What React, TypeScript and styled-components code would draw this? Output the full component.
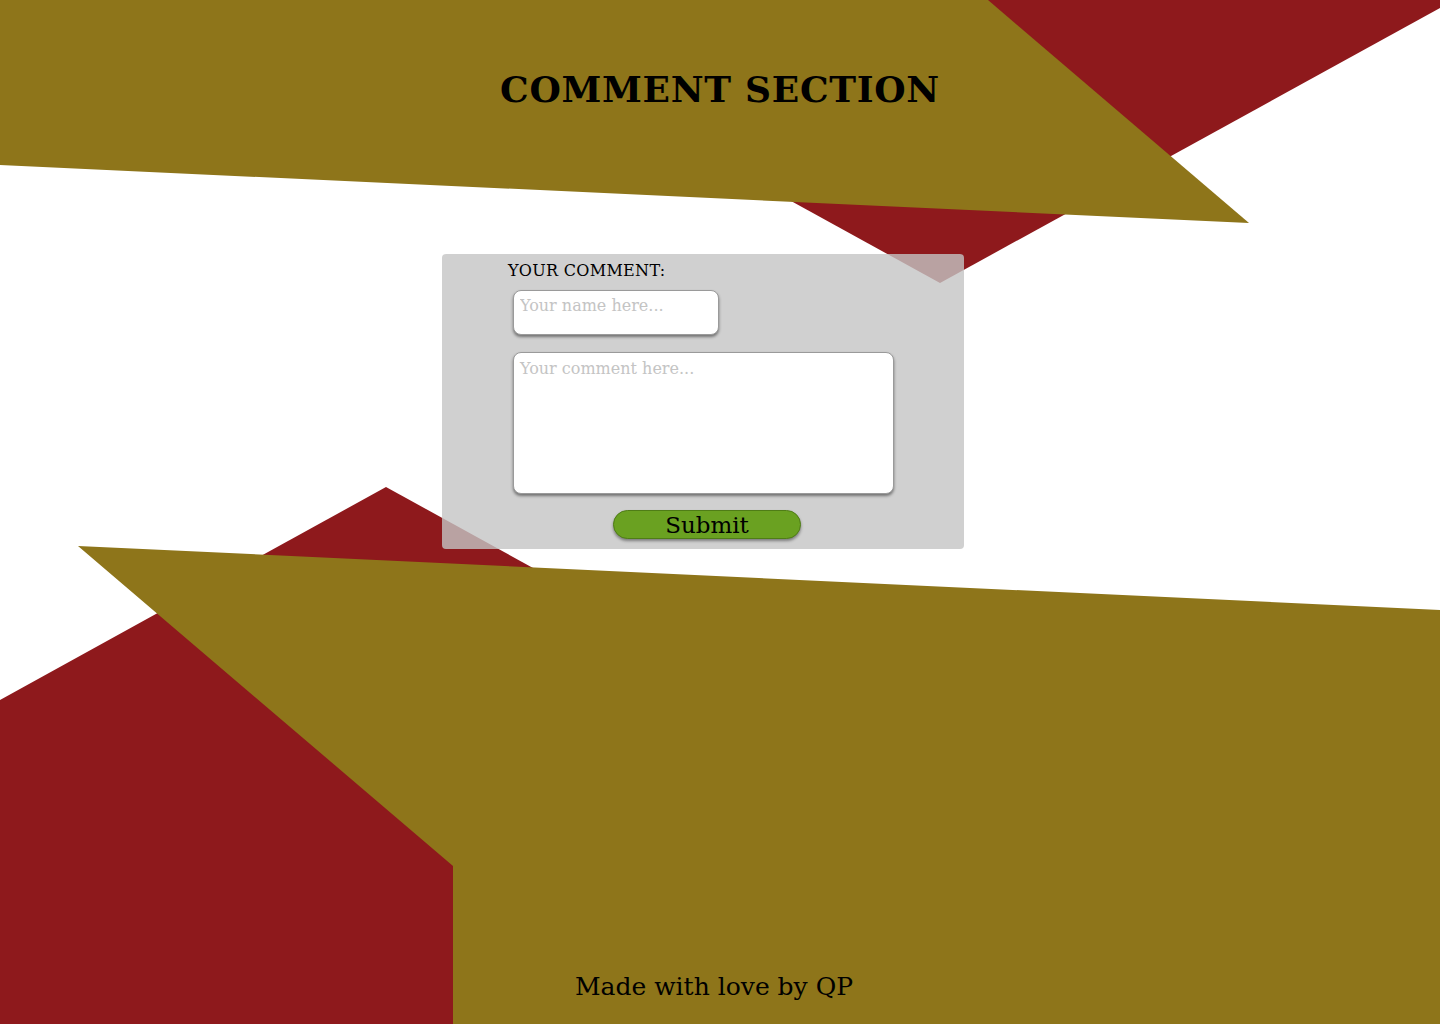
import React from "react";
import styled, { createGlobalStyle } from "styled-components";

const Global = createGlobalStyle`
  html, body { margin: 0; padding: 0; background: #ffffff; }
  body { font-family: "DejaVu Serif", "Liberation Serif", serif; }
  * { box-sizing: border-box; }
`;

const Page = styled.div`
  position: relative;
  width: 1440px;
  height: 1024px;
  overflow: hidden;
  display: flex;
  flex-direction: column;
`;

const Backdrop = styled.svg`
  position: absolute;
  inset: 0;
  width: 1440px;
  height: 1024px;
  z-index: 0;
`;

const Content = styled.div`
  position: relative;
  z-index: 1;
  display: flex;
  flex-direction: column;
  flex: 1;
`;

const Title = styled.h1`
  margin: 0;
  padding-top: 69px;
  height: 254px;
  text-align: center;
  font-family: "DejaVu Serif", serif;
  font-weight: bold;
  font-size: 36px;
  line-height: 40px;
  letter-spacing: 0.7px;
  color: #000;
`;

const FormBox = styled.form`
  margin-left: 442px;
  width: 522px;
  height: 295px;
  border-radius: 4px;
  background: rgba(196, 196, 196, 0.8);
  padding: 7px 70px 0 66px;
  display: flex;
  flex-direction: column;
`;

const Label = styled.label`
  font-family: "DejaVu Serif", serif;
  font-size: 16px;
  line-height: 20px;
  color: #000;
  letter-spacing: 0.3px;
`;

const fieldBase = `
  font-family: "DejaVu Serif", serif;
  font-size: 16px;
  color: #333;
  background: #fff;
  border: 1px solid #9a9a9a;
  border-radius: 8px;
  box-shadow: 0 2px 3px rgba(0, 0, 0, 0.45);
  outline: none;
  padding: 5px 6px;
  &::placeholder { color: #c4c4c4; }
`;

const NameInput = styled.input`
  ${fieldBase}
  margin: 9px 0 0 5px;
  width: 206px;
  height: 45px;
  align-self: flex-start;
  padding-bottom: 19px;
`;

const CommentArea = styled.textarea`
  ${fieldBase}
  margin: 17px 0 0 5px;
  width: 381px;
  height: 142px;
  resize: none;
  padding-top: 6px;
`;

const SubmitButton = styled.button`
  align-self: center;
  margin: 16px 0 0 12px;
  width: 188px;
  height: 29px;
  border-radius: 15px;
  border: 1px solid #4f7d16;
  background: #6aa121;
  box-shadow: 0 2px 3px rgba(0, 0, 0, 0.4);
  font-family: "DejaVu Serif", serif;
  font-size: 23px;
  line-height: 26px;
  color: #000;
  padding: 0;
  cursor: pointer;
`;

const Spacer = styled.div`
  flex: 1;
`;

const Footer = styled.footer`
  text-align: center;
  padding: 0 12px 22px 0;
  font-family: "DejaVu Serif", serif;
  font-size: 25px;
  line-height: 30px;
  color: #000;
`;

export default function App() {
  return (
    <>
      <Global />
      <Page>
        <Backdrop viewBox="0 0 1440 1024" aria-hidden="true">
          <polygon points="426,0 1440,0 1440,8 940,283" fill="#8e191c" />
          <polygon points="0,0 988,0 1249,223 0,165" fill="#8e751a" />
          <polygon points="386,487 1100,880 1100,1024 0,1024 0,700" fill="#8e191c" />
          <polygon points="78,546 1440,610 1440,1024 453,1024 453,866" fill="#8e751a" />
        </Backdrop>
        <Content>
          <Title>COMMENT SECTION</Title>
          <FormBox onSubmit={(e) => e.preventDefault()}>
            <Label htmlFor="name">YOUR COMMENT:</Label>
            <NameInput id="name" placeholder="Your name here..." />
            <CommentArea placeholder="Your comment here..." />
            <SubmitButton type="submit">Submit</SubmitButton>
          </FormBox>
          <Spacer />
          <Footer>Made with love by QP</Footer>
        </Content>
      </Page>
    </>
  );
}
